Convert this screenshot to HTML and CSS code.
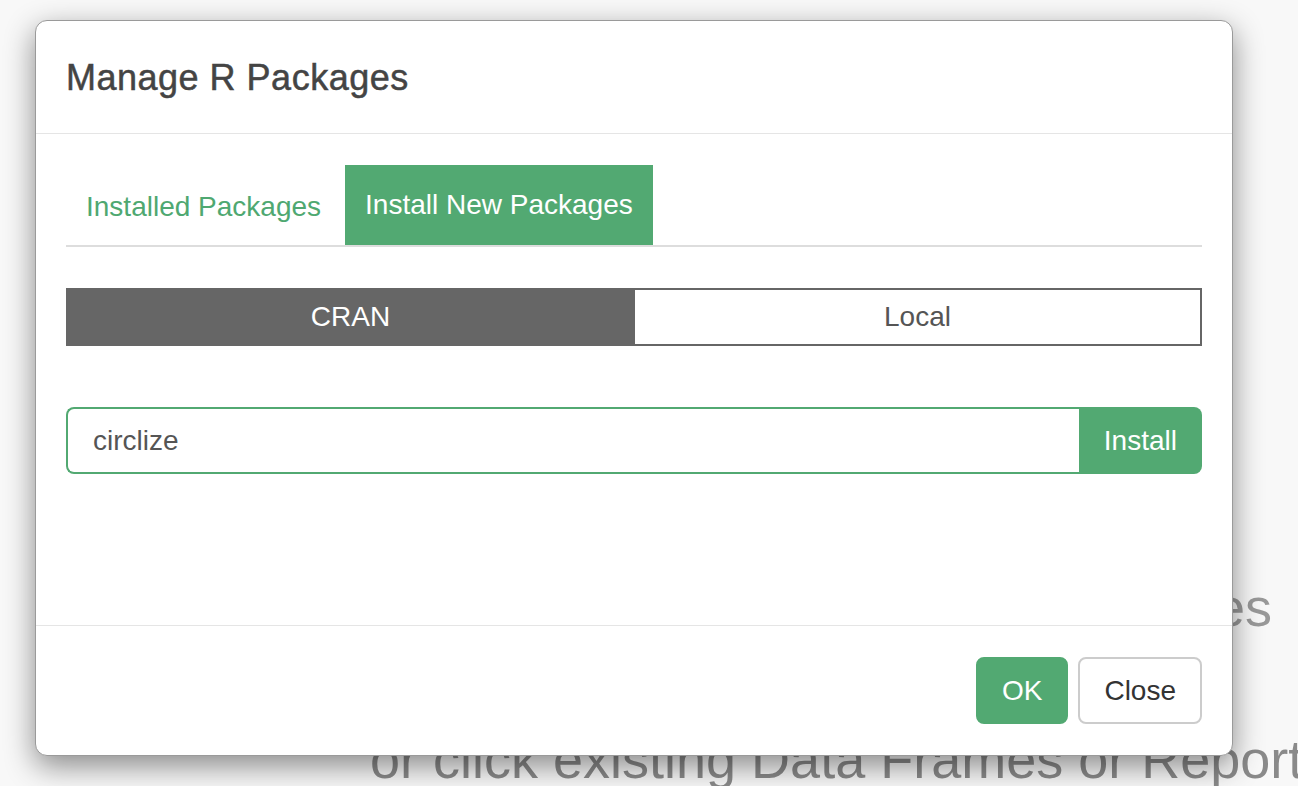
FILE: index.html
```html
<!DOCTYPE html>
<html lang="en">
<head>
<meta charset="utf-8">
<title>Manage R Packages</title>
<link rel="stylesheet" href="styles.css">
</head>
<body>
<div class="page">
  <div class="bg-line bg-line-1">Import Data Sources or Files</div>
  <div class="bg-line bg-line-2">Drag and drop a data file here</div>
  <div class="bg-line bg-line-3">or click existing Data Frames or Reports</div>
</div>

<div class="modal">
  <div class="modal-header">
    <h4 class="modal-title">Manage R Packages</h4>
  </div>
  <div class="modal-body">
    <div class="nav-tabs">
      <div class="tab">Installed Packages</div>
      <div class="tab active">Install New Packages</div>
    </div>
    <div class="segmented">
      <div class="seg seg-on">CRAN</div>
      <div class="seg seg-off">Local</div>
    </div>
    <div class="input-group">
      <div class="input">circlize</div>
      <div class="btn-install">Install</div>
    </div>
  </div>
  <div class="modal-footer">
    <div class="btn btn-ok">OK</div>
    <div class="btn btn-close">Close</div>
  </div>
</div>
</body>
</html>
```

FILE: styles.css
```css
html, body {
  margin: 0;
  padding: 0;
}
body {
  width: 1298px;
  height: 786px;
  overflow: hidden;
  background: #f8f8f8;
  font-family: "Liberation Sans", Arial, Helvetica, sans-serif;
  position: relative;
}

/* page behind the dialog */
.page {
  padding-top: 569px;
  white-space: nowrap;
}
.bg-line {
  font-size: 54px;
  line-height: 76px;
  color: #999;
}
.bg-line-1 {
  text-align: right;
  padding-right: 26px;
}
.bg-line-2 {
  text-align: center;
}
.bg-line-3 {
  padding-left: 370px;
  color: #8a8a8a;
}

/* dialog */
.modal {
  position: absolute;
  left: 35px;
  top: 20px;
  width: 1198px;
  box-sizing: border-box;
  background: #fff;
  border: 1px solid #9a9a9a;
  border-radius: 12px;
  box-shadow: 0 10px 30px rgba(0, 0, 0, 0.45);
}
.modal-header {
  padding: 31px 30px 30px;
  border-bottom: 1px solid #e5e5e5;
}
.modal-title {
  margin: 0;
  font-size: 36px;
  line-height: 51px;
  letter-spacing: 0.5px;
  font-weight: normal;
  color: #444;
  -webkit-text-stroke: 0.5px #444;
}
.modal-body {
  padding: 31px 30px 30px;
  min-height: 491px;
  box-sizing: border-box;
}

.nav-tabs {
  display: flex;
  gap: 4px;
  border-bottom: 2px solid #dddddd;
}
.tab {
  font-size: 28px;
  line-height: 40px;
  padding: 22px 20px 18px;
  color: #4fa871;
}
.tab.active {
  padding: 20px 20px 20px;
  background: #52a972;
  color: #fff;
}

.segmented {
  display: flex;
  margin-top: 41px;
  height: 58px;
}
.seg {
  flex: 1;
  display: flex;
  align-items: center;
  justify-content: center;
  font-size: 28px;
  box-sizing: border-box;
  border: 2px solid #666;
}
.seg-on {
  background: #666;
  color: #fff;
}
.seg-off {
  background: #fff;
  color: #555;
  border-left: none;
}

.input-group {
  display: flex;
  margin-top: 61px;
  height: 67px;
}
.input {
  flex: 1;
  box-sizing: border-box;
  border: 2px solid #52a972;
  border-right: none;
  border-radius: 8px 0 0 8px;
  padding: 0 25px;
  font-size: 28px;
  color: #555;
  display: flex;
  align-items: center;
}
.btn-install {
  background: #52a972;
  color: #fff;
  font-size: 28px;
  padding: 0 25px;
  display: flex;
  align-items: center;
  border-radius: 0 8px 8px 0;
}

.modal-footer {
  border-top: 1px solid #e5e5e5;
  padding: 31px 30px 31px;
  display: flex;
  justify-content: flex-end;
  gap: 10px;
}
.btn {
  font-size: 28px;
  line-height: 40px;
  padding: 12px 24px;
  border: 2px solid transparent;
  border-radius: 8px;
  height: 67px;
  box-sizing: border-box;
  display: flex;
  align-items: center;
}
.btn-ok {
  background: #52a972;
  border-color: #52a972;
  color: #fff;
}
.btn-close {
  background: #fff;
  border-color: #cccccc;
  color: #333;
}
```
